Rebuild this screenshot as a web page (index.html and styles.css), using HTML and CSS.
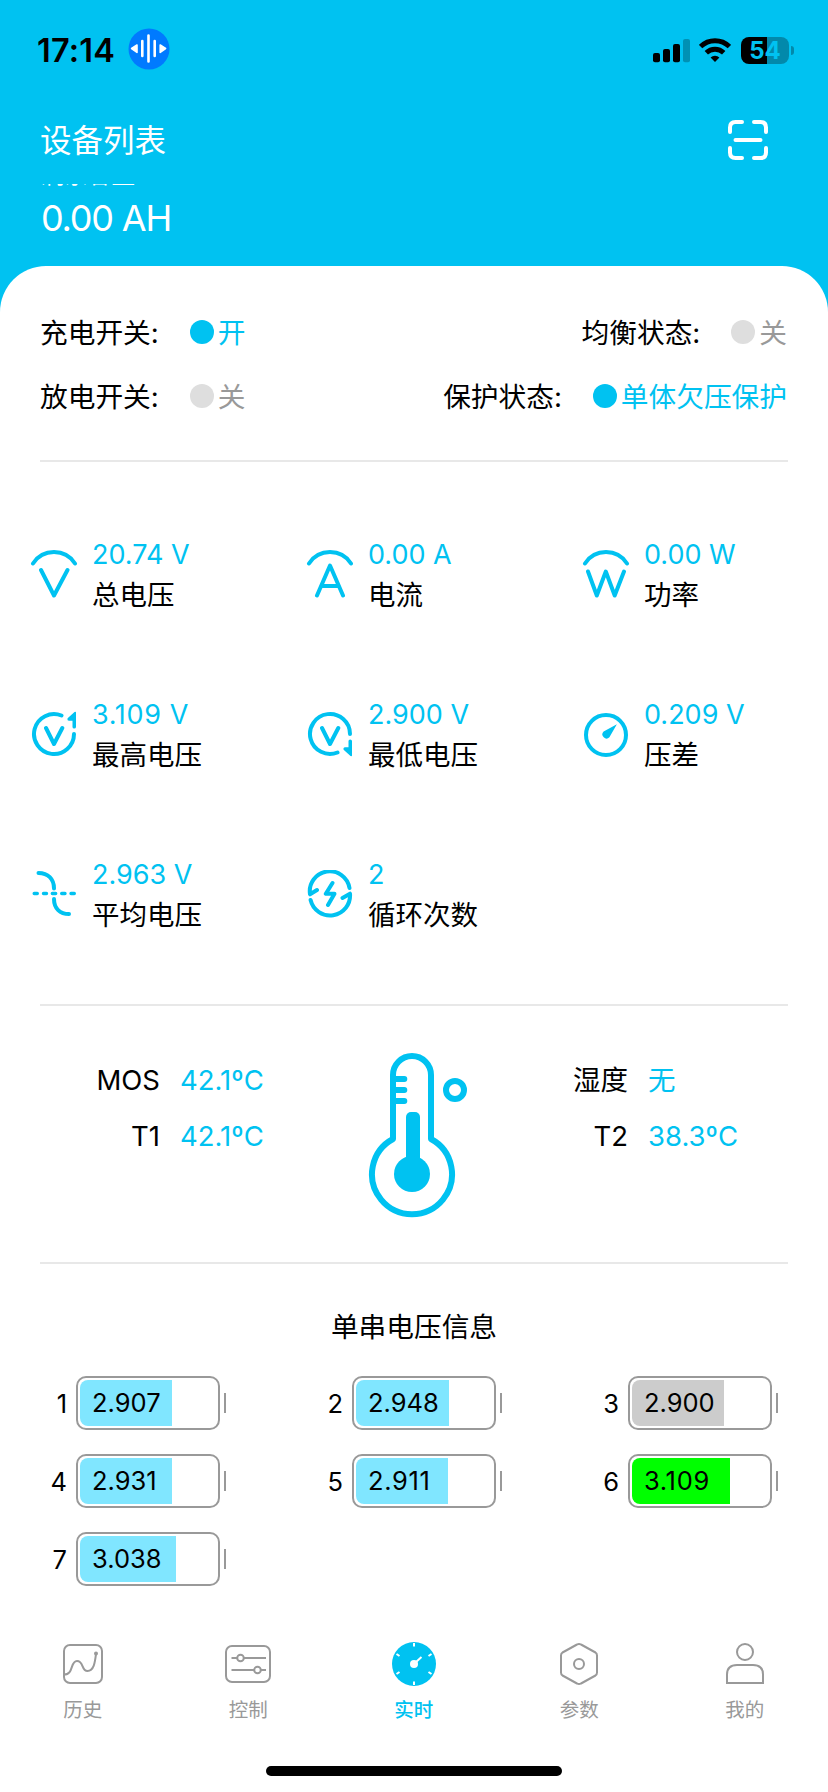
FILE: index.html
```html
<!DOCTYPE html>
<html lang="zh-CN">
<head>
<meta charset="utf-8">
<title>实时</title>
<link rel="stylesheet" href="styles.css">
</head>
<body>
<div class="page">
  <header class="header">
    <div class="status">
      <span class="time">17:14</span>
      <svg class="voice" width="42" height="42" viewBox="0 0 42 42">
        <circle cx="21" cy="21" r="20.5" fill="#007aff"/>
        <g stroke="#fff" stroke-width="2.6" stroke-linecap="round">
          <path d="M20.5 7.5v26M14.3 13v15M26.7 13v15"/>
        </g>
        <path d="M3.6 20.5L9 17v7.4zM37.6 20.5L32.2 17v7.4z" fill="#fff" stroke="#fff" stroke-width="1.6" stroke-linejoin="round"/>
      </svg>
      <svg class="signal" width="37" height="24" viewBox="0 0 37 24">
        <rect x="0" y="14" width="7" height="9.2" rx="2"/>
        <rect x="10" y="10" width="7" height="13.2" rx="2"/>
        <rect x="20" y="5" width="7" height="18.2" rx="2"/>
        <rect x="30" y="0" width="7" height="23.2" rx="2" opacity=".25"/>
      </svg>
      <svg class="wifi" width="32" height="24" viewBox="0 0 32 24">
        <g fill="none" stroke="#000" stroke-width="4.8">
          <path d="M1.6 8.6A20.6 20.6 0 0 1 30.4 8.6"/>
          <path d="M7.3 14.8A12.4 12.4 0 0 1 24.7 14.8"/>
        </g>
        <path d="M16 24L11.6 19.5A6.5 6.5 0 0 1 20.4 19.5z"/>
      </svg>
      <div class="battery"><span class="battery-body">54</span><span class="battery-nub"></span></div>
    </div>
    <div class="titlebar">
      <h1 class="title">设备列表</h1>
      <svg class="scan" width="40" height="40" viewBox="0 0 40 40" fill="none" stroke="#fff" stroke-width="4" stroke-linecap="round">
        <path d="M2 12V7.5Q2 2 7.5 2H14M26 2H32.5Q38 2 38 7.5V12M38 28V32.5Q38 38 32.5 38H26M14 38H7.5Q2 38 2 32.5V28M7.5 20H32.5"/>
      </svg>
    </div>
    <div class="capacity">
      <div class="capacity-label"><span>剩余容量</span></div>
      <div class="capacity-value">0.00 AH</div>
    </div>
  </header>

  <main class="panel">
    <section class="switches">
      <div class="switch-row">
        <div class="state on"><span class="state-name">充电开关:</span><i class="dot"></i><span class="state-value">开</span></div>
        <div class="state"><span class="state-name">均衡状态:</span><i class="dot"></i><span class="state-value">关</span></div>
      </div>
      <div class="switch-row">
        <div class="state"><span class="state-name">放电开关:</span><i class="dot"></i><span class="state-value">关</span></div>
        <div class="state on"><span class="state-name">保护状态:</span><i class="dot"></i><span class="state-value">单体欠压保护</span></div>
      </div>
    </section>

    <section class="metrics">
      <div class="metric">
        <svg class="icon" viewBox="0 0 48 48"><path d="M3 13.5A25 25 0 0 1 45 13.5M11 20L24 45.5L37.5 20"/></svg>
        <div><div class="value">20.74 V</div><div class="label">总电压</div></div>
      </div>
      <div class="metric">
        <svg class="icon" viewBox="0 0 48 48"><path d="M3 13.5A25 25 0 0 1 45 13.5M11 45.5L24 15.5L37 45.5M15.5 36H32.5"/></svg>
        <div><div class="value">0.00 A</div><div class="label">电流</div></div>
      </div>
      <div class="metric">
        <svg class="icon" viewBox="0 0 48 48"><path d="M3 13.5A25 25 0 0 1 45 13.5M6 21.5L14.8 45.5L23.8 21.5L32.7 45.5L42 21.5"/></svg>
        <div><div class="value">0.00 W</div><div class="label">功率</div></div>
      </div>
      <div class="metric">
        <svg class="icon" viewBox="0 0 48 48"><path d="M44 24A20 20 0 1 1 31.5 5.5M16 18L24 34L32.3 18"/><path class="solid" d="M46 2.5Q46 1.5 44.5 2L37.6 8.3Q37 10.8 39 10.8H42.5V17Q42.5 18.5 44.2 18.5T46 17z"/></svg>
        <div><div class="value wide">3.109 V</div><div class="label">最高电压</div></div>
      </div>
      <div class="metric">
        <svg class="icon" viewBox="0 0 48 48"><path d="M44 24A20 20 0 1 0 31.5 42.5M16 18L24 34L32.3 18"/><path class="solid" d="M46 45.5Q46 46.5 44.5 46L37.6 39.7Q37 37.2 39 37.2H42.5V31Q42.5 29.5 44.2 29.5T46 31z"/></svg>
        <div><div class="value">2.900 V</div><div class="label">最低电压</div></div>
      </div>
      <div class="metric">
        <svg class="icon" viewBox="0 0 48 48"><circle cx="24" cy="25" r="20"/><path class="solid" d="M34.9 14.3L21.6 21.6A4 4 0 1 0 27.4 27.2z"/></svg>
        <div><div class="value">0.209 V</div><div class="label">压差</div></div>
      </div>
      <div class="metric">
        <svg class="icon" viewBox="0 0 48 48"><path d="M8.5 3C18 3 24 9 24 18.5M24 29C24 38.500 30 44 39 44"/><path stroke-width="3.4" d="M4.2 23.5H7.3M13.5 23.5H16.5M22.3 23.5H25.7M31.7 23.5H35M41 23.5H44.3"/></svg>
        <div><div class="value">2.963 V</div><div class="label">平均电压</div></div>
      </div>
      <div class="metric">
        <svg class="icon" viewBox="0 0 48 48"><path d="M11 20L4 24.3A20 20 0 0 1 43.5 18M36.5 28L44 23.7A20 20 0 0 1 4.6 30M26.5 13L19.8 23.8H28.5L22 35"/></svg>
        <div><div class="value">2</div><div class="label">循环次数</div></div>
      </div>
    </section>

    <section class="temps">
      <dl class="temp-list">
        <dt>MOS</dt><dd>42.1ºC</dd>
        <dt>T1</dt><dd>42.1ºC</dd>
      </dl>
      <svg class="thermo" width="100" height="166" viewBox="0 0 100 166" fill="none" stroke="#00c2f1" stroke-width="6">
        <path stroke-linejoin="round" d="M25 87V23A19 19 0 0 1 63 23V87A40 40 0 1 1 25 87z"/>
        <path stroke-linecap="round" d="M25 27H36.3M25 38H36.3M25 49H36.3"/>
        <rect x="38" y="60" width="14" height="60" rx="5" fill="#00c2f1" stroke="none"/>
        <circle cx="44" cy="122" r="18" fill="#00c2f1" stroke="none"/>
        <circle cx="87" cy="38" r="9"/>
      </svg>
      <dl class="temp-list">
        <dt>湿度</dt><dd>无</dd>
        <dt>T2</dt><dd>38.3ºC</dd>
      </dl>
    </section>

    <section class="cells">
      <h2 class="cells-title">单串电压信息</h2>
      <div class="cell-grid">
        <div class="cell"><span class="cell-no">1</span><div class="cell-body"><div class="cell-fill" style="width:92px">2.907</div></div><i class="cell-tip"></i></div>
        <div class="cell"><span class="cell-no">2</span><div class="cell-body"><div class="cell-fill" style="width:93px">2.948</div></div><i class="cell-tip"></i></div>
        <div class="cell min"><span class="cell-no">3</span><div class="cell-body"><div class="cell-fill" style="width:91.6px">2.900</div></div><i class="cell-tip"></i></div>
        <div class="cell"><span class="cell-no">4</span><div class="cell-body"><div class="cell-fill" style="width:92px">2.931</div></div><i class="cell-tip"></i></div>
        <div class="cell"><span class="cell-no">5</span><div class="cell-body"><div class="cell-fill wide" style="width:92px">2.911</div></div><i class="cell-tip"></i></div>
        <div class="cell max"><span class="cell-no">6</span><div class="cell-body"><div class="cell-fill wide" style="width:98px">3.109</div></div><i class="cell-tip"></i></div>
        <div class="cell"><span class="cell-no">7</span><div class="cell-body"><div class="cell-fill" style="width:96px">3.038</div></div><i class="cell-tip"></i></div>
      </div>
    </section>
  </main>

  <nav class="tabs">
    <a class="tab">
      <svg class="tab-icon" viewBox="0 0 48 48"><rect x="5" y="5" width="38" height="38" rx="6"/><path d="M5 34.5C15 34.5 11 21 18 21S22 31 28.5 31S36 22 37 14"/><circle class="fill" cx="37" cy="13.5" r="2"/></svg>
      <span>历史</span>
    </a>
    <a class="tab">
      <svg class="tab-icon" viewBox="0 0 48 48"><rect x="2" y="6" width="44" height="36" rx="6"/><path d="M7.5 18H13M20 18H42M7.5 30H30M37 30H42"/><circle cx="16.5" cy="18" r="3.3"/><circle cx="33.5" cy="30" r="3.3"/></svg>
      <span>控制</span>
    </a>
    <a class="tab active">
      <svg class="tab-icon" viewBox="0 0 48 48"><circle class="fill" cx="24" cy="24" r="22"/><path stroke="#fff" d="M24 3V6.5M24 41.5V45M6.5 14L9.5 16M38.500 32L41.500 34M6.500 34L9.500 32M38.500 16L41.500 14M25 23L31.500 17"/><circle cx="24" cy="24" r="4" fill="#fff" stroke="none"/></svg>
      <span>实时</span>
    </a>
    <a class="tab">
      <svg class="tab-icon" viewBox="0 0 48 48"><path stroke-linejoin="round" d="M22 4.5Q24 3.300 26 4.5L40.5 12.5Q42 13.5 42 15.5V32.5Q42 34.5 40.5 35.5L26 43.5Q24 44.7 22 43.5L7.5 35.5Q6 34.5 6 32.5V15.5Q6 13.5 7.5 12.5z"/><circle cx="24" cy="24" r="5"/></svg>
      <span>参数</span>
    </a>
    <a class="tab">
      <svg class="tab-icon" viewBox="0 0 48 48"><circle cx="24" cy="12" r="8"/><path d="M6 43V34.5Q6 25 16 25H32Q42 25 42 34.5V43z"/></svg>
      <span>我的</span>
    </a>
  </nav>
  <div class="home"><i></i></div>
</div>
</body>
</html>
```
FILE: styles.css
```css
* { box-sizing: border-box; }
body { margin: 0; }
h1, h2, dl, dt, dd { margin: 0; font-weight: 400; }
i { display: block; }
svg { display: block; flex: none; }

.page {
  width: 828px;
  height: 1792px;
  display: flex;
  flex-direction: column;
  overflow: hidden;
  background: #00c2f1;
  color: #000;
  font-family: Inter, "Noto Sans CJK SC", sans-serif;
  font-size: 27.5px;
}

/* header */
.header { height: 266px; flex: none; color: #fff; }
.status {
  height: 96px;
  padding: 1px 34px 0 37px;
  display: flex;
  align-items: center;
  color: #000;
}
.time { width: 91px; padding-top: 3px; font-size: 32.5px; font-weight: 600; letter-spacing: 0.2px; }
.signal { margin-left: auto; margin-top: 4px; }
.wifi { margin-left: 9px; margin-top: 3px; }
.battery { margin-left: 10px; margin-top: 3px; display: flex; align-items: center; gap: 2px; }
.battery-body {
  width: 48px;
  height: 27px;
  border-radius: 8px;
  background: linear-gradient(90deg, #000 26px, #0289ab 26px);
  color: #00c2f1;
  font-size: 24px;
  font-weight: 700;
  line-height: 28px;
  text-align: center;
}
.battery-nub { width: 3px; height: 9px; border-radius: 0 4px 4px 0; background: #0289ab; }

.titlebar {
  height: 88px;
  padding: 0 60px 0 40px;
  display: flex;
  align-items: center;
  justify-content: space-between;
}
.title { padding-top: 2px; font-size: 31.5px; line-height: 44px; }
.capacity { padding-left: 41px; }
.capacity-label {
  height: 2px;
  overflow: hidden;
  display: flex;
  align-items: flex-end;
  font-size: 23.5px;
  line-height: 28px;
}
.capacity-label span { margin-bottom: -3px; }
.capacity-value { margin-top: 10px; font-size: 36px; line-height: 44px; letter-spacing: -1.2px; }

/* panel */
.panel {
  flex: 1;
  min-height: 0;
  background: #fff;
  border-radius: 46px 46px 0 0;
}
.switches {
  height: 196px;
  margin: 0 40px;
  padding-top: 34px;
  border-bottom: 2px solid #e8e8e8;
  font-size: 27.7px;
}
.switch-row { height: 64px; padding-right: 1px; display: flex; justify-content: space-between; align-items: center; }
.state { display: flex; align-items: center; color: #999; }
.state span { padding-bottom: 2px; }
.state-name { color: #000; margin-right: 31px; }
.dot { width: 24px; height: 24px; border-radius: 50%; background: #dedede; margin-right: 4px; }
.on { color: #00c2f1; }
.on .dot { background: #00c2f1; }

.metrics {
  height: 542px;
  padding: 72px 0 0 30px;
  display: grid;
  grid-template-columns: repeat(3, 276px);
  grid-auto-rows: 80px;
  row-gap: 80px;
  align-content: start;
}
.metric { display: flex; align-items: center; gap: 14px; line-height: 40px; white-space: nowrap; }
.metric > div { padding-top: 2px; }
.icon {
  width: 48px;
  height: 48px;
  fill: none;
  stroke: #00c2f1;
  stroke-width: 4;
  stroke-linecap: round;
  stroke-linejoin: round;
}
.icon .solid { fill: #00c2f1; stroke: none; }
.value { color: #00c2f1; font-size: 27px; }
.wide { letter-spacing: 0.65px; }

.temps {
  margin: 0 40px;
  height: 260px;
  border: solid #e8e8e8;
  border-width: 2px 0;
  padding-top: 46px;
  display: grid;
  grid-template-columns: 328px 100px 1fr;
}
.temp-list {
  display: grid;
  grid-template-columns: 120px 1fr;
  grid-auto-rows: 56px;
  column-gap: 20px;
  align-content: start;
  line-height: 56px;
}
.temp-list dt { text-align: right; }
.temp-list dd { color: #00c2f1; }
.thermo + .temp-list { padding-left: 40px; }

.cells-title { margin-top: 41px; font-size: 27.7px; line-height: 44px; text-align: center; }
.cell-grid {
  margin-top: 27px;
  display: grid;
  grid-template-columns: repeat(3, 276px);
  row-gap: 24px;
}
.cell { display: flex; align-items: center; font-size: 25.5px; }
.cell-no { width: 67px; margin-right: 9px; text-align: right; }
.cell-body { width: 144px; height: 54px; padding: 2px; border: 2px solid #999; border-radius: 10px; }
.cell-fill {
  height: 46px;
  padding-left: 12px;
  border-radius: 8px 0 0 8px;
  background: #80e6ff;
  line-height: 46px;
}
.min .cell-fill { background: #ccc; }
.max .cell-fill { background: #0f0; }
.cell-tip { width: 2px; height: 20px; margin-left: 4px; background: #999; }

/* bottom navigation */
.tabs {
  flex: none;
  height: 126px;
  display: grid;
  grid-template-columns: repeat(5, 165.5px);
  background: #fff;
}
.tab {
  display: flex;
  flex-direction: column;
  align-items: center;
  color: #999;
  font-size: 19.5px;
  line-height: 30px;
}
.tab-icon { width: 48px; height: 48px; margin-bottom: 7px; fill: none; stroke: currentColor; stroke-width: 2; }
.tab-icon .fill { fill: currentColor; stroke: none; }
.active { color: #00c2f1; font-weight: 500; }
.home { flex: none; height: 26px; background: #fff; display: flex; justify-content: center; align-items: flex-start; }
.home i { width: 296px; height: 10px; border-radius: 5px; background: #000; }
```
